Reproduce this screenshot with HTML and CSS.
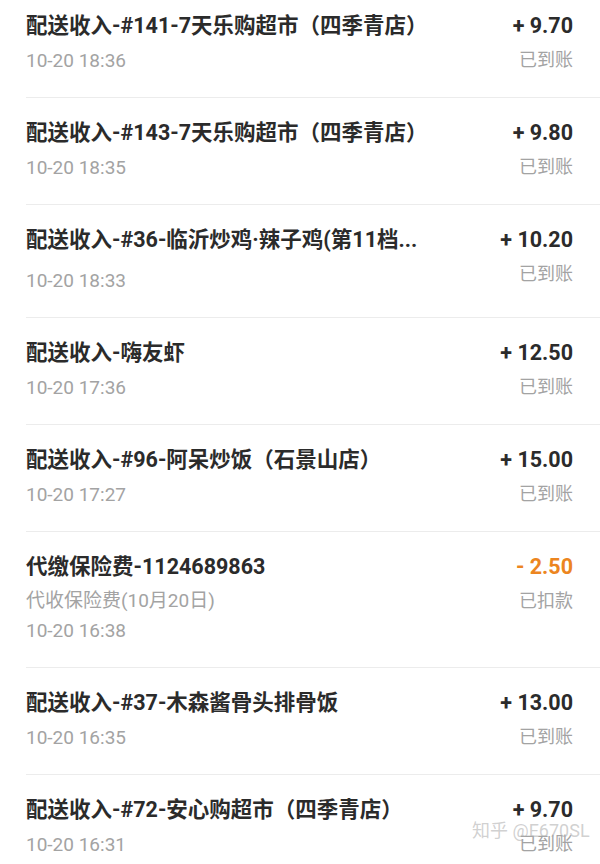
FILE: index.html
```html
<!DOCTYPE html>
<html lang="zh-CN">
<head>
    <meta charset="UTF-8">
    <meta name="viewport" content="width=device-width, initial-scale=1.0">
    <title>收支明细</title>
    <link rel="stylesheet" href="styles.css">
</head>
<body>
    <ul class="records">
        <li class="record">
            <div class="record-info">
                <div class="record-title">配送收入-#141-7天乐购超市（四季青店）</div>
                <div class="record-time">10-20 18:36</div>
            </div>
            <div class="record-side">
                <div class="record-amount">+ 9.70</div>
                <div class="record-status">已到账</div>
            </div>
        </li>
        <li class="record">
            <div class="record-info">
                <div class="record-title">配送收入-#143-7天乐购超市（四季青店）</div>
                <div class="record-time">10-20 18:35</div>
            </div>
            <div class="record-side">
                <div class="record-amount">+ 9.80</div>
                <div class="record-status">已到账</div>
            </div>
        </li>
        <li class="record">
            <div class="record-info">
                <div class="record-title record-title--long">配送收入-#36-临沂炒鸡·辣子鸡(第11档...</div>
                <div class="record-time">10-20 18:33</div>
            </div>
            <div class="record-side">
                <div class="record-amount">+ 10.20</div>
                <div class="record-status">已到账</div>
            </div>
        </li>
        <li class="record">
            <div class="record-info">
                <div class="record-title">配送收入-嗨友虾</div>
                <div class="record-time">10-20 17:36</div>
            </div>
            <div class="record-side">
                <div class="record-amount">+ 12.50</div>
                <div class="record-status">已到账</div>
            </div>
        </li>
        <li class="record">
            <div class="record-info">
                <div class="record-title">配送收入-#96-阿呆炒饭（石景山店）</div>
                <div class="record-time">10-20 17:27</div>
            </div>
            <div class="record-side">
                <div class="record-amount">+ 15.00</div>
                <div class="record-status">已到账</div>
            </div>
        </li>
        <li class="record">
            <div class="record-info">
                <div class="record-title">代缴保险费-1124689863</div>
                <div class="record-sub">代收保险费(10月20日)</div>
                <div class="record-time">10-20 16:38</div>
            </div>
            <div class="record-side">
                <div class="record-amount record-amount--out">- 2.50</div>
                <div class="record-status">已扣款</div>
            </div>
        </li>
        <li class="record">
            <div class="record-info">
                <div class="record-title">配送收入-#37-木森酱骨头排骨饭</div>
                <div class="record-time">10-20 16:35</div>
            </div>
            <div class="record-side">
                <div class="record-amount">+ 13.00</div>
                <div class="record-status">已到账</div>
            </div>
        </li>
        <li class="record">
            <div class="record-info">
                <div class="record-title">配送收入-#72-安心购超市（四季青店）</div>
                <div class="record-time">10-20 16:31</div>
            </div>
            <div class="record-side">
                <div class="record-amount">+ 9.70</div>
                <div class="record-status">已到账</div>
            </div>
        </li>
    </ul>

    <div class="watermark">知乎 @E670SL</div>
</body>
</html>
```

FILE: styles.css
```css
body {
    margin: 0;
    padding: 0;
    background-color: #fff;
    font-family: Roboto, "Noto Sans CJK SC", sans-serif;
    color: #333;
    overflow: hidden;
    height: 864px;
    position: relative;
}

.records {
    list-style: none;
    margin: -9px 0 0 26px;
    padding: 0;
}

.record {
    display: flex;
    justify-content: space-between;
    padding: 21px 27px 24px 0;
    border-bottom: 1px solid #ececec;
}

.record-info {
    min-width: 0;
}

.record-title {
    font-size: 21.5px;
    line-height: 28px;
    font-weight: bold;
    color: #2b2b2b;
    white-space: nowrap;
}

.record-title--long {
    padding-bottom: 6px;
}

.record-time {
    font-size: 19px;
    line-height: 24px;
    color: #a3a3a3;
    margin-top: 9px;
}

.record-sub {
    font-size: 19px;
    line-height: 24px;
    color: #a3a3a3;
    margin-top: 8px;
}

.record-sub + .record-time {
    margin-top: 6px;
}

.record-side {
    text-align: right;
    flex-shrink: 0;
}

.record-amount {
    font-size: 21.5px;
    line-height: 28px;
    font-weight: bold;
    color: #2b2b2b;
}

.record-amount--out {
    color: #ec8520;
}

.record-status {
    font-size: 18px;
    line-height: 24px;
    color: #a3a3a3;
    margin-top: 8px;
}

.watermark {
    position: absolute;
    left: 472px;
    top: 819px;
    font-size: 18px;
    line-height: 24px;
    color: rgba(170, 170, 170, 0.55);
    white-space: nowrap;
}
```
